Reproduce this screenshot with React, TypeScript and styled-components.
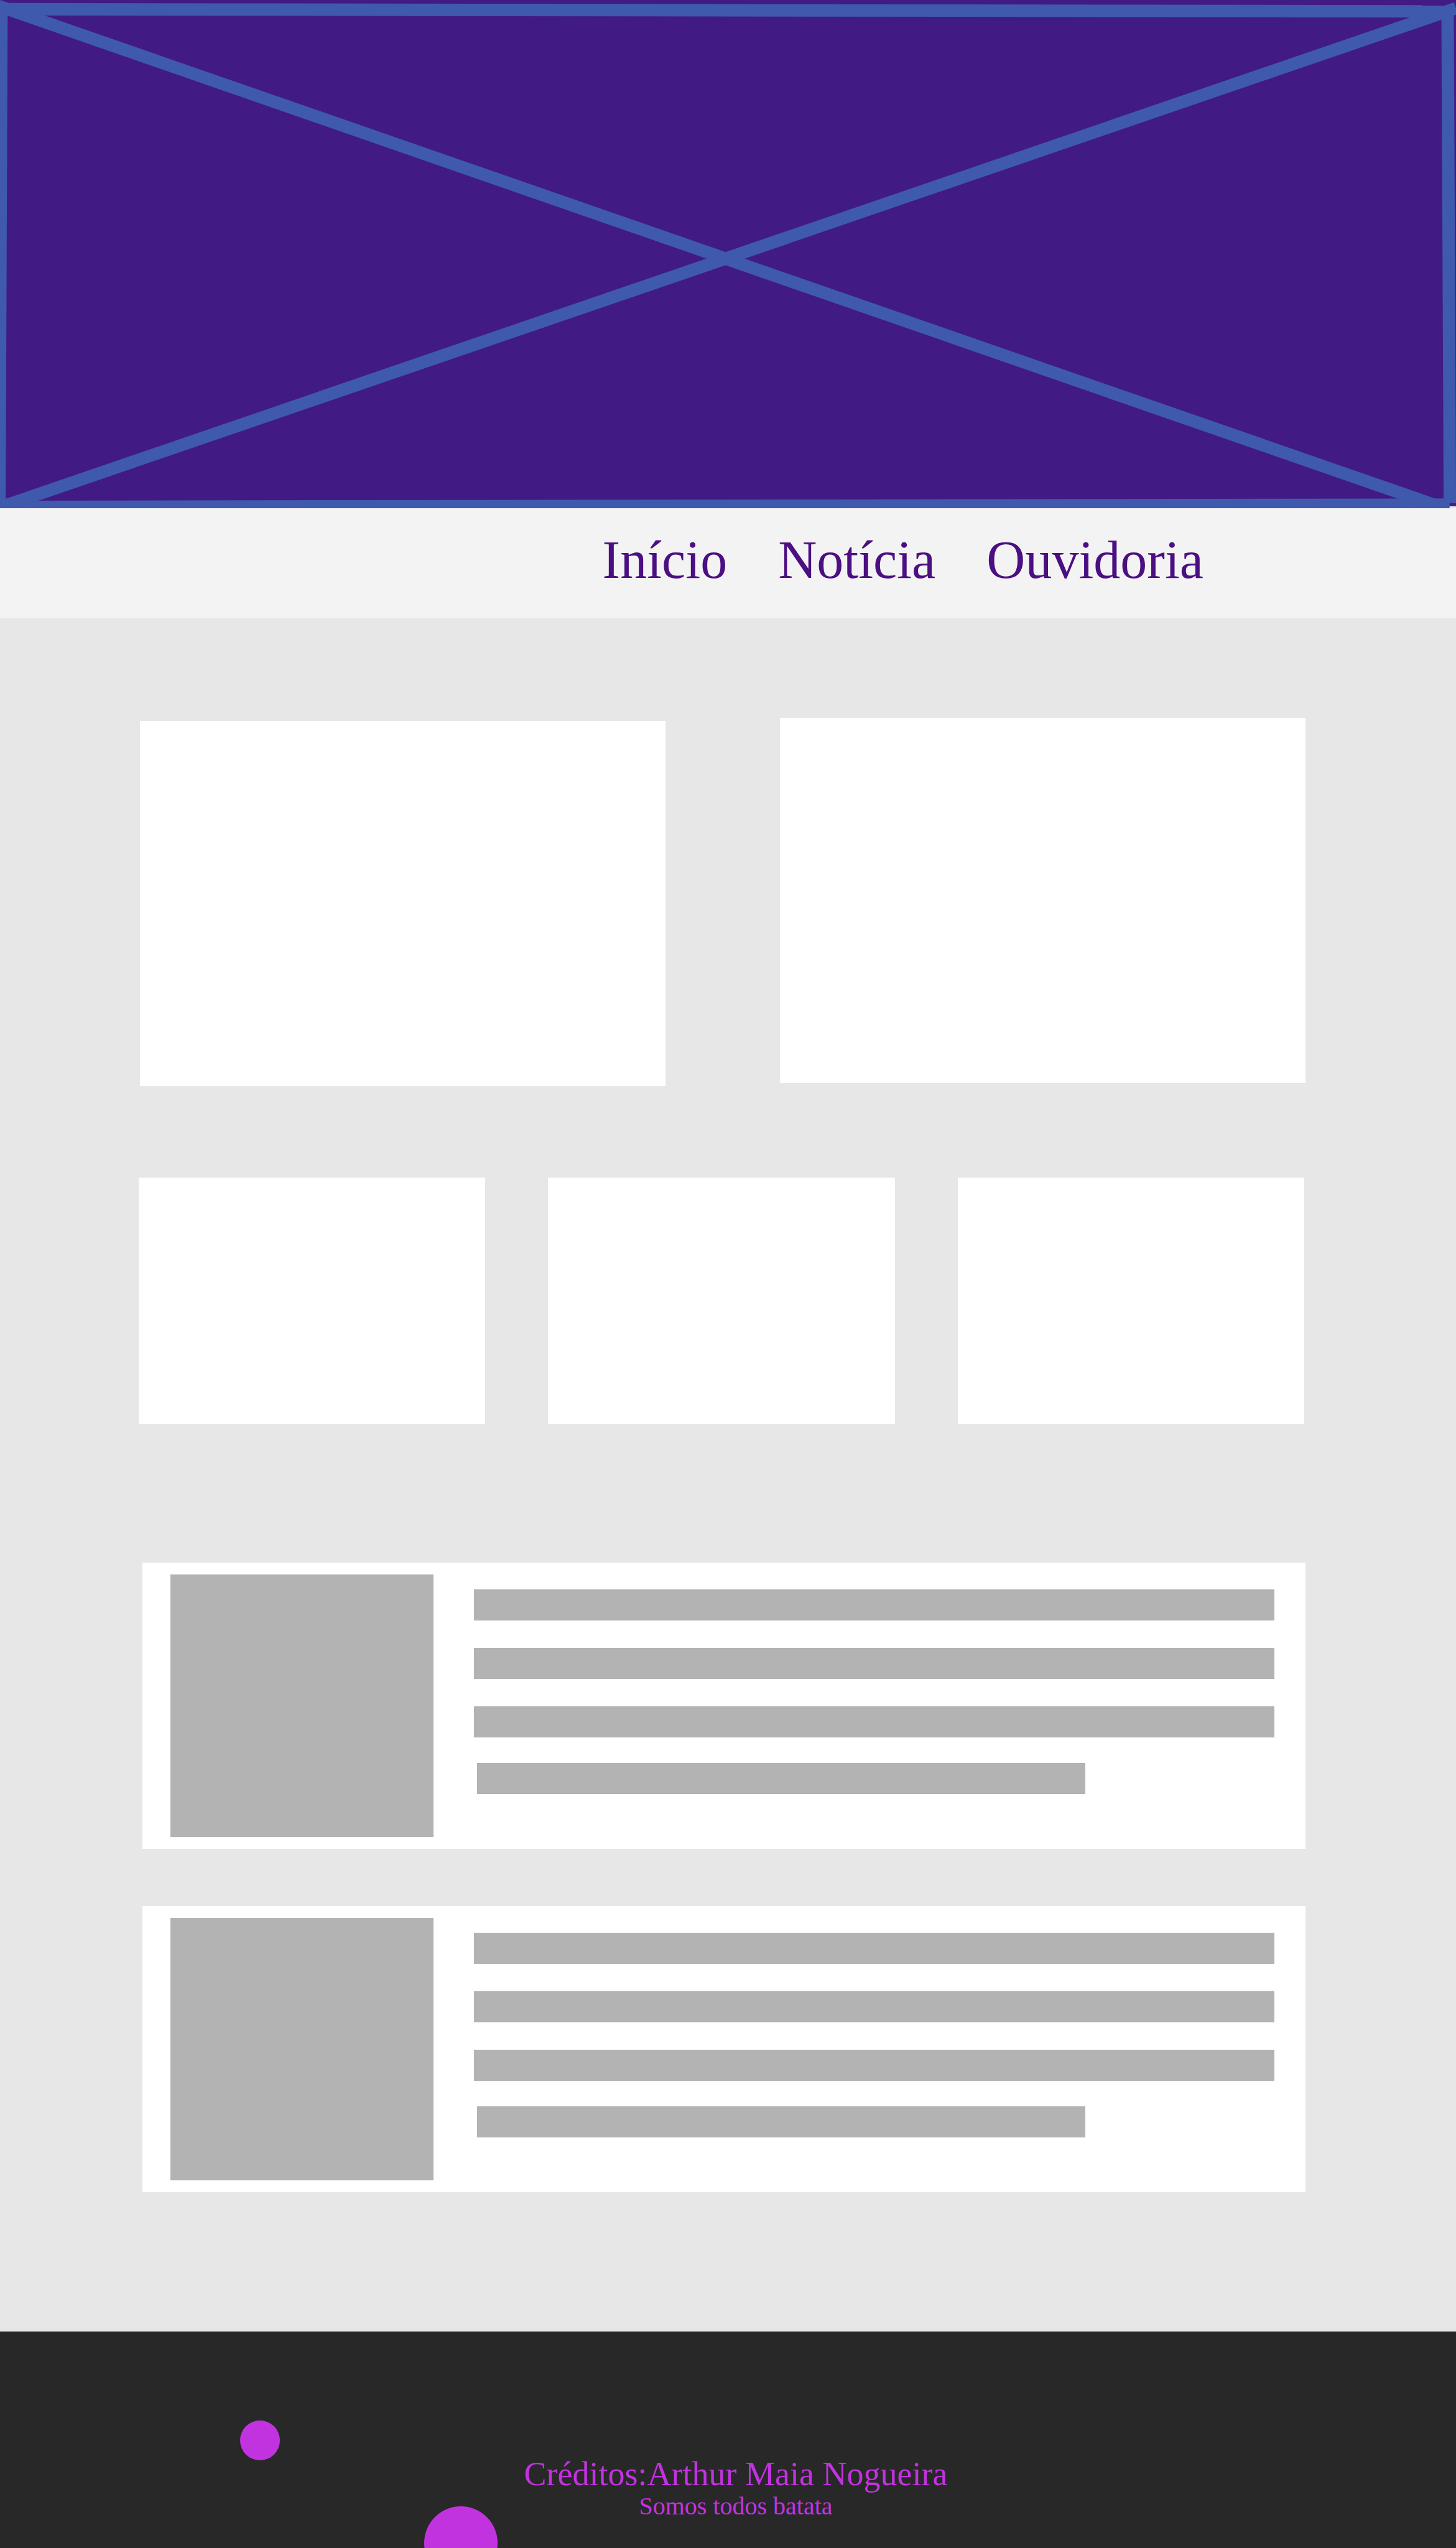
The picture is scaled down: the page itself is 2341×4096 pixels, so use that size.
import React from "react";
import styled, { createGlobalStyle } from "styled-components";

const GlobalStyle = createGlobalStyle`
  *, *::before, *::after { box-sizing: border-box; }
  body {
    margin: 0;
    background: #e7e7e7;
    font-family: "Liberation Serif", "Times New Roman", serif;
  }
`;

const Page = styled.div`
  display: flex;
  flex-direction: column;
  min-height: 100vh;
`;

const Banner = styled.header`
  width: 100%;
  aspect-ratio: 2341 / 817;
`;

const BannerArt = styled.svg`
  display: block;
  width: 100%;
  height: 100%;
`;

const NavBar = styled.nav`
  display: flex;
  justify-content: flex-end;
  gap: 82px;
  padding: 35px 406px 46px 0;
  background: #f3f3f3;
`;

const NavLink = styled.a`
  color: #4b0f82;
  font-size: 86px;
  line-height: 96px;
  text-decoration: none;
  white-space: nowrap;
`;

const Main = styled.main`
  display: flex;
  flex-direction: column;
  padding: 160px 0 224px;
`;

const FeatureRow = styled.section`
  display: flex;
  gap: 184px;
  min-height: 592px;
  padding: 0 242px 0 225px;
`;

const FeatureCard = styled.article<{ $align: "start" | "end" }>`
  flex: 1;
  align-self: flex-${(p) => p.$align};
  aspect-ratio: 845 / 587;
  background: #ffffff;
`;

const CardRow = styled.section`
  display: flex;
  gap: 101px;
  margin-top: 147px;
  padding: 0 244px 0 223px;
`;

const Card = styled.article`
  flex: 1;
  aspect-ratio: 557 / 395;
  background: #ffffff;
`;

const NewsList = styled.section`
  display: flex;
  flex-direction: column;
  gap: 92px;
  margin-top: 223px;
  padding: 0 242px 0 229px;
`;

const NewsItem = styled.article`
  display: flex;
  gap: 65px;
  padding: 19px 50px 19px 45px;
  background: #ffffff;
`;

const Thumbnail = styled.div`
  flex: none;
  width: 423px;
  height: 422px;
  background: #b3b3b3;
`;

const Summary = styled.div`
  flex: 1;
  display: flex;
  flex-direction: column;
  gap: 41px;
  padding-top: 24px;
`;

const Paragraph = styled.div`
  display: flex;
  flex-direction: column;
  gap: 44px;
`;

const Line = styled.div`
  height: 50px;
  background: #b3b3b3;
`;

const ClosingLine = styled(Line)`
  width: 76%;
  margin-left: 5px;
`;

const Footer = styled.footer`
  position: relative;
  flex: 1;
  min-height: 348px;
  padding: 199px 0 0 25px;
  overflow: hidden;
  background: #282828;
  color: #c233e0;
  text-align: center;
`;

const Credits = styled.p`
  margin: 0;
  font-size: 54px;
  line-height: 60px;
`;

const Motto = styled.p`
  margin: 0;
  font-size: 40px;
  line-height: 44px;
`;

const Bubble = styled.span<{ $size: number; $left: number; $top: number }>`
  position: absolute;
  left: ${(p) => p.$left}px;
  top: ${(p) => p.$top}px;
  width: ${(p) => p.$size}px;
  height: ${(p) => p.$size}px;
  border-radius: 50%;
  background: #c233e0;
`;

const links = [
  { label: "Início", href: "#inicio" },
  { label: "Notícia", href: "#noticia" },
  { label: "Ouvidoria", href: "#ouvidoria" },
];

function News() {
  return (
    <NewsItem>
      <Thumbnail />
      <Summary>
        <Paragraph>
          <Line />
          <Line />
          <Line />
        </Paragraph>
        <ClosingLine />
      </Summary>
    </NewsItem>
  );
}

export default function App() {
  return (
    <>
      <GlobalStyle />
      <Page>
        <Banner>
          <BannerArt viewBox="0 0 2480 866" preserveAspectRatio="none" aria-hidden="true">
            <rect width="2480" height="862" fill="#421a83" />
            <g stroke="#3f59ad" strokeWidth="21.2" fill="none">
              <path d="M0 15.7L2466 19.3" />
              <path d="M2.5 16L-1 866" />
              <path d="M0 863.3L2469 859.5" />
              <path d="M2465.7 18L2469.5 857" />
              <path d="M-20 4.2L2466.5 867.8" />
              <path d="M-20 870.8L2480 14" />
            </g>
          </BannerArt>
        </Banner>
        <NavBar>
          {links.map((l) => (
            <NavLink key={l.href} href={l.href}>
              {l.label}
            </NavLink>
          ))}
        </NavBar>
        <Main>
          <FeatureRow>
            <FeatureCard $align="end" />
            <FeatureCard $align="start" />
          </FeatureRow>
          <CardRow>
            <Card />
            <Card />
            <Card />
          </CardRow>
          <NewsList>
            <News />
            <News />
          </NewsList>
        </Main>
        <Footer>
          <Bubble $size={64} $left={386} $top={143} />
          <Bubble $size={118} $left={682} $top={281} />
          <Credits>Créditos:Arthur Maia Nogueira</Credits>
          <Motto>Somos todos batata</Motto>
        </Footer>
      </Page>
    </>
  );
}
